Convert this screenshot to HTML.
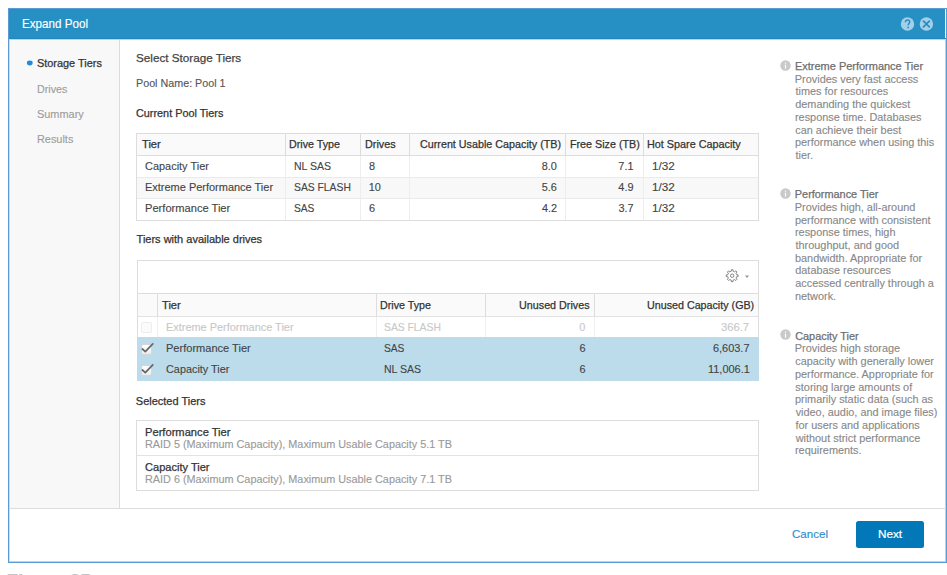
<!DOCTYPE html>
<html><head><meta charset="utf-8"><title>Expand Pool</title>
<style>
html,body{margin:0;padding:0;background:#fff;width:947px;height:575px;overflow:hidden;}
body{position:relative;font-family:"Liberation Sans", sans-serif;}
body>div, body>svg{position:absolute;}
.t{white-space:nowrap;line-height:1;transform-origin:0 0;}
</style></head><body>
<div style="left:8px;top:8px;width:939px;height:555px;background:#fff;box-sizing:border-box;border:1px solid #5B9BD5;"></div>
<div style="left:9px;top:39px;width:1px;height:522px;background:#dadada;"></div>
<div style="left:945px;top:39px;width:1px;height:522px;background:#cfcfcf;"></div>
<div style="left:9px;top:561px;width:937px;height:1px;background:#cfcfcf;"></div>
<div style="left:9px;top:9px;width:936px;height:30px;background:#268FC3;"></div>
<div style="left:9px;top:38px;width:937px;height:1px;background:#2088BE;"></div>
<div class="t" style="left:21.97px;top:18.00px;font-size:12.2px;color:#fff;transform:scaleX(0.9554);-webkit-text-stroke:0.15px #fff;">Expand Pool</div>
<svg style="left:900px;top:16px" width="34" height="16" viewBox="0 0 34 16">
<circle cx="7.5" cy="8" r="6.7" fill="#A3CFE8"/>
<path d="M5.4 6.3 C5.4 4.9 6.3 4.1 7.6 4.1 C8.9 4.1 9.7 4.9 9.7 6 C9.7 7.3 8.2 7.5 8.1 9.2" stroke="#268FC3" stroke-width="1.5" fill="none"/>
<circle cx="8.1" cy="11.4" r="0.9" fill="#268FC3"/>
<circle cx="26.4" cy="8" r="6.7" fill="#A3CFE8"/>
<path d="M23.0 4.6 L29.8 11.4 M29.8 4.6 L23.0 11.4" stroke="#268FC3" stroke-width="1.7"/>
</svg>
<div style="left:10px;top:39px;width:109px;height:469px;background:#F8F8F8;"></div>
<div style="left:119px;top:39px;width:1px;height:469px;background:#dcdcdc;"></div>
<svg style="left:20px;top:55px" width="20" height="16" viewBox="0 0 20 16"><ellipse cx="9.8" cy="8" rx="2.9" ry="2.4" fill="#1F8BDD"/></svg>
<div class="t" style="left:36.61px;top:58.00px;font-size:11.0px;color:#333;transform:scaleX(0.9912);-webkit-text-stroke:0.25px #333;">Storage Tiers</div>
<div class="t" style="left:36.64px;top:84.00px;font-size:10.6px;color:#9c9c9c;transform:scaleX(1.0128);-webkit-text-stroke:0.12px #9c9c9c;">Drives</div>
<div class="t" style="left:36.51px;top:109.00px;font-size:10.8px;color:#9c9c9c;transform:scaleX(1.0123);-webkit-text-stroke:0.12px #9c9c9c;">Summary</div>
<div class="t" style="left:36.63px;top:134.00px;font-size:10.6px;color:#9c9c9c;transform:scaleX(1.0284);-webkit-text-stroke:0.12px #9c9c9c;">Results</div>
<div style="left:9px;top:39px;width:937px;height:1px;background:#B5D9EC;"></div>
<div style="left:9px;top:508px;width:937px;height:1px;background:#dcdcdc;"></div>
<div class="t" style="left:792.12px;top:529.00px;font-size:11.3px;color:#2B8CCF;transform:scaleX(1.0224);-webkit-text-stroke:0.12px #2B8CCF;">Cancel</div>
<div style="left:856px;top:521px;width:68px;height:27px;border-radius:2.5px;background:#0278B9;"></div>
<div class="t" style="left:877.56px;top:529.00px;font-size:11.8px;color:#fff;transform:scaleX(0.9937);-webkit-text-stroke:0.2px #fff;">Next</div>
<div class="t" style="left:136.17px;top:53.00px;font-size:11.8px;color:#444;transform:scaleX(0.9904);-webkit-text-stroke:0.25px #444;">Select Storage Tiers</div>
<div class="t" style="left:136.14px;top:78.00px;font-size:10.7px;color:#555;transform:scaleX(1.0052);-webkit-text-stroke:0.12px #555;">Pool Name: Pool 1</div>
<div class="t" style="left:136.46px;top:108.00px;font-size:10.9px;color:#333;transform:scaleX(0.9951);-webkit-text-stroke:0.25px #333;">Current Pool Tiers</div>
<div class="t" style="left:136.58px;top:234.00px;font-size:11.0px;color:#333;-webkit-text-stroke:0.25px #333;">Tiers with available drives</div>
<div class="t" style="left:135.80px;top:396.00px;font-size:11.0px;color:#333;-webkit-text-stroke:0.25px #333;">Selected Tiers</div>
<div style="left:136px;top:133px;width:623px;height:88px;box-sizing:border-box;border:1px solid #DDDDDD;background:#fff;"></div>
<div style="left:137px;top:134px;width:621px;height:21px;background:#FAFAFA;"></div>
<div style="left:137px;top:177px;width:621px;height:21px;background:#F8F8F8;"></div>
<div style="left:137px;top:155px;width:621px;height:1px;background:#DDDDDD;"></div>
<div style="left:137px;top:177px;width:621px;height:1px;background:#EAEAEA;"></div>
<div style="left:137px;top:198px;width:621px;height:1px;background:#EAEAEA;"></div>
<div style="left:285px;top:134px;width:1px;height:21px;background:#DDDDDD;"></div>
<div style="left:285px;top:156px;width:1px;height:64px;background:#EDEDED;"></div>
<div style="left:360px;top:134px;width:1px;height:21px;background:#DDDDDD;"></div>
<div style="left:360px;top:156px;width:1px;height:64px;background:#EDEDED;"></div>
<div style="left:409px;top:134px;width:1px;height:21px;background:#DDDDDD;"></div>
<div style="left:409px;top:156px;width:1px;height:64px;background:#EDEDED;"></div>
<div style="left:565px;top:134px;width:1px;height:21px;background:#DDDDDD;"></div>
<div style="left:565px;top:156px;width:1px;height:64px;background:#EDEDED;"></div>
<div style="left:643px;top:134px;width:1px;height:21px;background:#DDDDDD;"></div>
<div style="left:643px;top:156px;width:1px;height:64px;background:#EDEDED;"></div>
<div class="t" style="left:141.68px;top:139.00px;font-size:11.2px;color:#333;transform:scaleX(0.9933);-webkit-text-stroke:0.25px #333;">Tier</div>
<div class="t" style="left:289.44px;top:139.00px;font-size:11.2px;color:#333;transform:scaleX(0.9574);-webkit-text-stroke:0.25px #333;">Drive Type</div>
<div class="t" style="left:364.63px;top:139.00px;font-size:11.2px;color:#333;transform:scaleX(0.9684);-webkit-text-stroke:0.25px #333;">Drives</div>
<div class="t" style="left:419.76px;top:139.00px;font-size:11.2px;color:#333;transform:scaleX(0.9612);-webkit-text-stroke:0.25px #333;">Current Usable Capacity (TB)</div>
<div class="t" style="left:569.64px;top:139.00px;font-size:11.2px;color:#333;transform:scaleX(0.9588);-webkit-text-stroke:0.25px #333;">Free Size (TB)</div>
<div class="t" style="left:647.13px;top:139.00px;font-size:11.2px;color:#333;transform:scaleX(0.9667);-webkit-text-stroke:0.25px #333;">Hot Spare Capacity</div>
<div class="t" style="left:145.25px;top:161.00px;font-size:10.9px;color:#444;transform:scaleX(1.0049);-webkit-text-stroke:0.12px #444;">Capacity Tier</div>
<div class="t" style="left:293.96px;top:161.00px;font-size:10.9px;color:#444;transform:scaleX(0.9674);-webkit-text-stroke:0.12px #444;">NL SAS</div>
<div class="t" style="left:369.11px;top:161.00px;font-size:10.9px;color:#444;-webkit-text-stroke:0.12px #444;">8</div>
<div class="t" style="left:541.73px;top:161.00px;font-size:10.9px;color:#444;-webkit-text-stroke:0.12px #444;">8.0</div>
<div class="t" style="left:618.34px;top:161.00px;font-size:10.9px;color:#444;-webkit-text-stroke:0.12px #444;">7.1</div>
<div class="t" style="left:652.12px;top:161.00px;font-size:10.9px;color:#444;transform:scaleX(1.0737);-webkit-text-stroke:0.12px #444;">1/32</div>
<div class="t" style="left:144.92px;top:182.00px;font-size:10.9px;color:#444;transform:scaleX(1.0074);-webkit-text-stroke:0.12px #444;">Extreme Performance Tier</div>
<div class="t" style="left:294.33px;top:182.00px;font-size:10.9px;color:#444;transform:scaleX(0.9490);-webkit-text-stroke:0.12px #444;">SAS FLASH</div>
<div class="t" style="left:368.78px;top:182.00px;font-size:10.9px;color:#444;-webkit-text-stroke:0.12px #444;">10</div>
<div class="t" style="left:541.78px;top:182.00px;font-size:10.9px;color:#444;-webkit-text-stroke:0.12px #444;">5.6</div>
<div class="t" style="left:618.34px;top:182.00px;font-size:10.9px;color:#444;-webkit-text-stroke:0.12px #444;">4.9</div>
<div class="t" style="left:652.12px;top:182.00px;font-size:10.9px;color:#444;transform:scaleX(1.0737);-webkit-text-stroke:0.12px #444;">1/32</div>
<div class="t" style="left:144.91px;top:203.00px;font-size:10.9px;color:#444;transform:scaleX(1.0204);-webkit-text-stroke:0.12px #444;">Performance Tier</div>
<div class="t" style="left:294.34px;top:203.00px;font-size:10.9px;color:#444;transform:scaleX(0.9366);-webkit-text-stroke:0.12px #444;">SAS</div>
<div class="t" style="left:369.06px;top:203.00px;font-size:10.9px;color:#444;-webkit-text-stroke:0.12px #444;">6</div>
<div class="t" style="left:541.89px;top:203.00px;font-size:10.9px;color:#444;-webkit-text-stroke:0.12px #444;">4.2</div>
<div class="t" style="left:618.39px;top:203.00px;font-size:10.9px;color:#444;-webkit-text-stroke:0.12px #444;">3.7</div>
<div class="t" style="left:652.12px;top:203.00px;font-size:10.9px;color:#444;transform:scaleX(1.0737);-webkit-text-stroke:0.12px #444;">1/32</div>
<div style="left:137px;top:260px;width:622px;height:121px;box-sizing:border-box;border:1px solid #DDDDDD;background:#fff;"></div>
<div style="left:138px;top:293px;width:620px;height:1px;background:#DDDDDD;"></div>
<div style="left:138px;top:294px;width:620px;height:22px;background:#FAFAFA;"></div>
<div style="left:138px;top:316px;width:620px;height:1px;background:#E3E3E3;"></div>
<div style="left:137px;top:337px;width:622px;height:44px;background:#BCDCEC;"></div>
<div style="left:157px;top:294px;width:1px;height:22px;background:#DDDDDD;"></div>
<div style="left:157px;top:317px;width:1px;height:20px;background:#F0F0F0;"></div>
<div style="left:376px;top:294px;width:1px;height:22px;background:#DDDDDD;"></div>
<div style="left:376px;top:317px;width:1px;height:20px;background:#F0F0F0;"></div>
<div style="left:485px;top:294px;width:1px;height:22px;background:#DDDDDD;"></div>
<div style="left:485px;top:317px;width:1px;height:20px;background:#F0F0F0;"></div>
<div style="left:594px;top:294px;width:1px;height:22px;background:#DDDDDD;"></div>
<div style="left:594px;top:317px;width:1px;height:20px;background:#F0F0F0;"></div>
<svg style="left:724px;top:267px" width="30" height="17" viewBox="0 0 30 17">
<g transform="translate(8.2,8.7)" fill="none" stroke="#666" stroke-width="0.8" stroke-linejoin="round">
<path d="M4.38,-1.01 L5.94,-0.84 L5.94,0.84 L4.38,1.01 L3.82,2.38 L4.79,3.61 L3.61,4.79 L2.38,3.82 L1.01,4.38 L0.84,5.94 L-0.84,5.94 L-1.01,4.38 L-2.38,3.82 L-3.61,4.79 L-4.79,3.61 L-3.82,2.38 L-4.38,1.01 L-5.94,0.84 L-5.94,-0.84 L-4.38,-1.01 L-3.82,-2.38 L-4.79,-3.61 L-3.61,-4.79 L-2.38,-3.82 L-1.01,-4.38 L-0.84,-5.94 L0.84,-5.94 L1.01,-4.38 L2.38,-3.82 L3.61,-4.79 L4.79,-3.61 L3.82,-2.38 Z"/>
<circle cx="0" cy="0" r="1.7"/>
</g>
<path d="M20.9 8.4 L25.1 8.4 L23 10.9 Z" fill="#9a9a9a"/>
</svg>
<div class="t" style="left:161.58px;top:300.00px;font-size:11.2px;color:#333;transform:scaleX(0.9933);-webkit-text-stroke:0.25px #333;">Tier</div>
<div class="t" style="left:379.74px;top:300.00px;font-size:11.2px;color:#333;transform:scaleX(0.9574);-webkit-text-stroke:0.25px #333;">Drive Type</div>
<div class="t" style="left:519.09px;top:300.00px;font-size:11.2px;color:#333;transform:scaleX(0.9621);-webkit-text-stroke:0.25px #333;">Unused Drives</div>
<div class="t" style="left:646.90px;top:300.00px;font-size:11.2px;color:#333;transform:scaleX(0.9576);-webkit-text-stroke:0.25px #333;">Unused Capacity (GB)</div>
<div class="t" style="left:165.73px;top:322.00px;font-size:10.9px;color:#C8C8C8;transform:scaleX(1.0034);-webkit-text-stroke:0.12px #C8C8C8;">Extreme Performance Tier</div>
<div class="t" style="left:384.33px;top:322.00px;font-size:10.9px;color:#C8C8C8;transform:scaleX(0.9490);-webkit-text-stroke:0.12px #C8C8C8;">SAS FLASH</div>
<div class="t" style="left:579.33px;top:322.00px;font-size:10.9px;color:#C8C8C8;-webkit-text-stroke:0.12px #C8C8C8;">0</div>
<div class="t" style="left:721.45px;top:322.00px;font-size:10.9px;color:#C8C8C8;transform:scaleX(1.0316);-webkit-text-stroke:0.12px #C8C8C8;">366.7</div>
<div style="left:141px;top:322px;width:11px;height:11px;box-sizing:border-box;border:1px solid #EDEDED;border-radius:2px;background:#fbfbfb;"></div>
<div class="t" style="left:165.72px;top:343.00px;font-size:10.9px;color:#444;transform:scaleX(1.0144);-webkit-text-stroke:0.12px #444;">Performance Tier</div>
<div class="t" style="left:384.34px;top:343.00px;font-size:10.9px;color:#444;transform:scaleX(0.9366);-webkit-text-stroke:0.12px #444;">SAS</div>
<div class="t" style="left:579.39px;top:343.00px;font-size:10.9px;color:#444;-webkit-text-stroke:0.12px #444;">6</div>
<div class="t" style="left:713.05px;top:343.00px;font-size:10.9px;color:#444;transform:scaleX(1.0039);-webkit-text-stroke:0.12px #444;">6,603.7</div>
<div style="left:141px;top:344px;width:11px;height:11px;box-sizing:border-box;border:1px solid #D6D6D6;border-radius:2px;background:linear-gradient(#fff,#ececec);"></div>
<svg style="left:140px;top:341px" width="16" height="16" viewBox="0 0 16 16"><path d="M2.4 8 L5.3 10.6 L12.8 2.8" stroke="#666" stroke-width="1.7" fill="none" stroke-linecap="round" stroke-linejoin="round"/></svg>
<div class="t" style="left:166.06px;top:364.00px;font-size:10.9px;color:#444;transform:scaleX(0.9969);-webkit-text-stroke:0.12px #444;">Capacity Tier</div>
<div class="t" style="left:383.96px;top:364.00px;font-size:10.9px;color:#444;transform:scaleX(0.9674);-webkit-text-stroke:0.12px #444;">NL SAS</div>
<div class="t" style="left:579.39px;top:364.00px;font-size:10.9px;color:#444;-webkit-text-stroke:0.12px #444;">6</div>
<div class="t" style="left:707.68px;top:364.00px;font-size:10.9px;color:#444;transform:scaleX(1.0056);-webkit-text-stroke:0.12px #444;">11,006.1</div>
<div style="left:141px;top:365px;width:11px;height:11px;box-sizing:border-box;border:1px solid #D6D6D6;border-radius:2px;background:linear-gradient(#fff,#ececec);"></div>
<svg style="left:140px;top:362px" width="16" height="16" viewBox="0 0 16 16"><path d="M2.4 8 L5.3 10.6 L12.8 2.8" stroke="#666" stroke-width="1.7" fill="none" stroke-linecap="round" stroke-linejoin="round"/></svg>
<div style="left:136px;top:420px;width:623px;height:71px;box-sizing:border-box;border:1px solid #DDDDDD;background:#fff;"></div>
<div style="left:137px;top:455px;width:621px;height:1px;background:#E3E3E3;"></div>
<div class="t" style="left:145.01px;top:427.00px;font-size:11.0px;color:#333;transform:scaleX(1.0136);-webkit-text-stroke:0.25px #333;">Performance Tier</div>
<div class="t" style="left:145.03px;top:439.00px;font-size:10.6px;color:#999;transform:scaleX(1.0230);-webkit-text-stroke:0.12px #999;">RAID 5 (Maximum Capacity), Maximum Usable Capacity 5.1 TB</div>
<div class="t" style="left:145.35px;top:462.00px;font-size:11.0px;color:#333;transform:scaleX(1.0052);-webkit-text-stroke:0.25px #333;">Capacity Tier</div>
<div class="t" style="left:145.03px;top:474.00px;font-size:10.6px;color:#999;transform:scaleX(1.0230);-webkit-text-stroke:0.12px #999;">RAID 6 (Maximum Capacity), Maximum Usable Capacity 7.1 TB</div>
<svg style="left:780px;top:59.50px" width="11" height="11" viewBox="0 0 11 11"><circle cx="5.5" cy="5.5" r="5.2" fill="#C9C9C9"/><rect x="4.9" y="4.7" width="1.2" height="3.9" fill="#fff"/><rect x="4.9" y="2.6" width="1.2" height="1.2" fill="#fff"/></svg>
<div class="t" style="left:794.82px;top:61.00px;font-size:10.9px;color:#6e6e6e;transform:scaleX(1.0074);-webkit-text-stroke:0.25px #6e6e6e;">Extreme Performance Tier</div>
<div class="t" style="left:794.83px;top:74.00px;font-size:10.9px;color:#888;-webkit-text-stroke:0.12px #888;">Provides very fast access</div>
<div class="t" style="left:795.54px;top:86.00px;font-size:10.9px;color:#888;-webkit-text-stroke:0.12px #888;">times for resources</div>
<div class="t" style="left:795.26px;top:99.00px;font-size:10.9px;color:#888;-webkit-text-stroke:0.12px #888;">demanding the quickest</div>
<div class="t" style="left:794.99px;top:112.00px;font-size:10.9px;color:#888;-webkit-text-stroke:0.12px #888;">response time. Databases</div>
<div class="t" style="left:795.26px;top:125.00px;font-size:10.9px;color:#888;-webkit-text-stroke:0.12px #888;">can achieve their best</div>
<div class="t" style="left:794.99px;top:137.00px;font-size:10.9px;color:#888;-webkit-text-stroke:0.12px #888;">performance when using this</div>
<div class="t" style="left:795.54px;top:150.00px;font-size:10.9px;color:#888;-webkit-text-stroke:0.12px #888;">tier.</div>
<svg style="left:780px;top:187.70px" width="11" height="11" viewBox="0 0 11 11"><circle cx="5.5" cy="5.5" r="5.2" fill="#C9C9C9"/><rect x="4.9" y="4.7" width="1.2" height="3.9" fill="#fff"/><rect x="4.9" y="2.6" width="1.2" height="1.2" fill="#fff"/></svg>
<div class="t" style="left:794.83px;top:189.00px;font-size:10.9px;color:#6e6e6e;-webkit-text-stroke:0.25px #6e6e6e;">Performance Tier</div>
<div class="t" style="left:794.83px;top:202.00px;font-size:10.9px;color:#888;-webkit-text-stroke:0.12px #888;">Provides high, all-around</div>
<div class="t" style="left:794.99px;top:215.00px;font-size:10.9px;color:#888;-webkit-text-stroke:0.12px #888;">performance with consistent</div>
<div class="t" style="left:794.99px;top:227.00px;font-size:10.9px;color:#888;-webkit-text-stroke:0.12px #888;">response times, high</div>
<div class="t" style="left:795.54px;top:240.00px;font-size:10.9px;color:#888;-webkit-text-stroke:0.12px #888;">throughput, and good</div>
<div class="t" style="left:794.99px;top:253.00px;font-size:10.9px;color:#888;-webkit-text-stroke:0.12px #888;">bandwidth. Appropriate for</div>
<div class="t" style="left:795.26px;top:265.00px;font-size:10.9px;color:#888;-webkit-text-stroke:0.12px #888;">database resources</div>
<div class="t" style="left:795.26px;top:278.00px;font-size:10.9px;color:#888;-webkit-text-stroke:0.12px #888;">accessed centrally through a</div>
<div class="t" style="left:794.99px;top:291.00px;font-size:10.9px;color:#888;-webkit-text-stroke:0.12px #888;">network.</div>
<svg style="left:780px;top:329.30px" width="11" height="11" viewBox="0 0 11 11"><circle cx="5.5" cy="5.5" r="5.2" fill="#C9C9C9"/><rect x="4.9" y="4.7" width="1.2" height="3.9" fill="#fff"/><rect x="4.9" y="2.6" width="1.2" height="1.2" fill="#fff"/></svg>
<div class="t" style="left:795.16px;top:331.00px;font-size:10.9px;color:#6e6e6e;-webkit-text-stroke:0.25px #6e6e6e;">Capacity Tier</div>
<div class="t" style="left:794.83px;top:343.00px;font-size:10.9px;color:#888;-webkit-text-stroke:0.12px #888;">Provides high storage</div>
<div class="t" style="left:795.26px;top:356.00px;font-size:10.9px;color:#888;-webkit-text-stroke:0.12px #888;">capacity with generally lower</div>
<div class="t" style="left:794.99px;top:369.00px;font-size:10.9px;color:#888;-webkit-text-stroke:0.12px #888;">performance. Appropriate for</div>
<div class="t" style="left:795.37px;top:382.00px;font-size:10.9px;color:#888;-webkit-text-stroke:0.12px #888;">storing large amounts of</div>
<div class="t" style="left:794.99px;top:394.00px;font-size:10.9px;color:#888;-webkit-text-stroke:0.12px #888;">primarily static data (such as</div>
<div class="t" style="left:795.65px;top:407.00px;font-size:10.9px;color:#888;-webkit-text-stroke:0.12px #888;">video, audio, and image files)</div>
<div class="t" style="left:795.54px;top:420.00px;font-size:10.9px;color:#888;-webkit-text-stroke:0.12px #888;">for users and applications</div>
<div class="t" style="left:795.70px;top:433.00px;font-size:10.9px;color:#888;-webkit-text-stroke:0.12px #888;">without strict performance</div>
<div class="t" style="left:794.99px;top:445.00px;font-size:10.9px;color:#888;-webkit-text-stroke:0.12px #888;">requirements.</div>
<div class="t" style="left:6.48px;top:571.00px;font-size:19px;color:#c4c4c4;-webkit-text-stroke:0.12px #c4c4c4;font-weight:bold;">Figure 35</div>
</body></html>
